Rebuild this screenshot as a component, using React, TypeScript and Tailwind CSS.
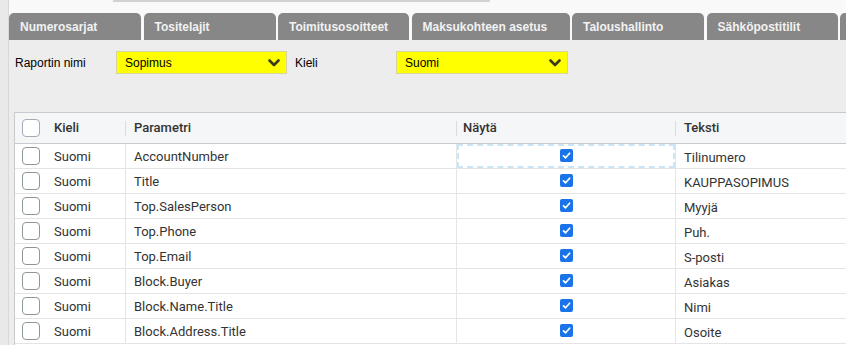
import React from "react";

const tabs: { label: string; w: string }[] = [
  { label: "Numerosarjat", w: "w-[132px]" },
  { label: "Tositelajit", w: "w-[132px]" },
  { label: "Toimitusosoitteet", w: "w-[131px]" },
  { label: "Maksukohteen asetus", w: "w-[158px]" },
  { label: "Taloushallinto", w: "w-[132px]" },
  { label: "Sähköpostitilit", w: "w-[131px]" },
  { label: "", w: "w-[60px]" },
];

const rows: [string, string][] = [
  ["AccountNumber", "Tilinumero"],
  ["Title", "KAUPPASOPIMUS"],
  ["Top.SalesPerson", "Myyjä"],
  ["Top.Phone", "Puh."],
  ["Top.Email", "S-posti"],
  ["Block.Buyer", "Asiakas"],
  ["Block.Name.Title", "Nimi"],
  ["Block.Address.Title", "Osoite"],
];

function Chevron() {
  return (
    <svg width="12" height="8" viewBox="0 0 12 8" className="shrink-0">
      <polyline points="1.5,1.5 6,6 10.5,1.5" fill="none" stroke="#3a3a1a" strokeWidth="2.6" strokeLinecap="round" strokeLinejoin="round" />
    </svg>
  );
}

function Select({ value, w }: { value: string; w: string }) {
  return (
    <div className={`${w} h-[23px] bg-[#ffff00] border border-[#d6d6a0] flex items-center justify-between pl-[8px] pr-[6px] text-[12px] text-black`}>
      <span>{value}</span>
      <Chevron />
    </div>
  );
}

function Box() {
  return <div className="w-[18px] h-[18px] rounded-[4px] border border-[#8d9896] bg-white" />;
}

function Checked() {
  return (
    <div className="w-[13px] h-[13px] rounded-[2px] bg-[#1a73e8] flex items-center justify-center">
      <svg width="9" height="9" viewBox="0 0 9 9">
        <polyline points="1.5,4.8 3.6,6.8 7.6,2.2" fill="none" stroke="white" strokeWidth="1.7" strokeLinecap="round" strokeLinejoin="round" />
      </svg>
    </div>
  );
}

export default function App() {
  return (
    <div className="w-[846px] h-[345px] overflow-hidden flex bg-[#f9f9f9]" style={{ fontFamily: '"Liberation Sans", Arial, sans-serif' }}>
      <div className="w-[9px] shrink-0 bg-[#e9e9e9] border-r border-[#d8d8d8]" />
      <div className="flex-1 flex flex-col min-w-0">
        <div className="h-[13px] shrink-0">
          <div className="ml-[104px] w-[377px] h-[2px] bg-[#d2d2d2]" />
        </div>
        <div className="h-[27px] shrink-0 flex gap-[2.5px] overflow-hidden">
          {tabs.map((t, i) => (
            <div key={i} className={`${t.w} shrink-0 h-full bg-[#878787] rounded-t-[5px] flex items-center pl-[11px] text-[12px] font-bold text-[#f2f2f2] whitespace-nowrap`}>
              {t.label}
            </div>
          ))}
        </div>
        <div className="flex-1 bg-[#ededed] flex flex-col">
          <div className="flex items-center pt-[11px] pl-[6px] h-[34px] text-[12px] text-black">
            <div className="w-[101px]">Raportin nimi</div>
            <Select value="Sopimus" w="w-[171px]" />
            <div className="w-[101px] pl-[8px] box-content">Kieli</div>
            <Select value="Suomi" w="w-[172px]" />
          </div>
          <div className="mt-[38px] ml-[5px] flex-1 border-l border-t border-[#c6cbd0] bg-white text-[13px] text-[#333]" style={{ fontFamily: "Roboto, sans-serif" }}>
            <div className="grid grid-cols-[30px_80px_331px_219px_1fr] h-[31px] bg-[#f5f6f7] border-b border-[#c6cbd0] font-medium">
              <div className="flex items-center pl-[7px]">
                <div className="w-[18px] h-[18px] rounded-[4px] border border-[#a3aab8] bg-white" />
              </div>
              <div className="flex items-center pl-[9px]">Kieli</div>
              <div className="flex items-center">
                <div className="border-l border-[#dcdcdc] h-[15px] pl-[8px] flex items-center">Parametri</div>
              </div>
              <div className="flex items-center">
                <div className="border-l border-[#dcdcdc] h-[15px] pl-[6px] flex items-center">Näytä</div>
              </div>
              <div className="flex items-center">
                <div className="border-l border-[#dcdcdc] h-[15px] pl-[8px] flex items-center">Teksti</div>
              </div>
            </div>
            {rows.map(([p, t], i) => (
              <div key={p} className="grid grid-cols-[30px_80px_331px_219px_1fr] h-[25px] border-b border-[#e4e4e4]">
                <div className="flex items-center pl-[7px]">
                  <Box />
                </div>
                <div className="flex items-center pl-[9px] pt-[2px]">Suomi</div>
                <div className="flex items-center pl-[8px] pt-[2px] border-l border-[#e4e4e4]">{p}</div>
                <div className="border-l border-[#e4e4e4]">
                  <div className={`h-full flex justify-center ${i === 0 ? "border-2 border-dashed border-[#cbe5f8] pt-[3px]" : "pt-[5px]"}`}>
                    <Checked />
                  </div>
                </div>
                <div className="flex items-center pl-[8px] pt-[4px] border-l border-[#e4e4e4]">{t}</div>
              </div>
            ))}
          </div>
        </div>
      </div>
    </div>
  );
}
